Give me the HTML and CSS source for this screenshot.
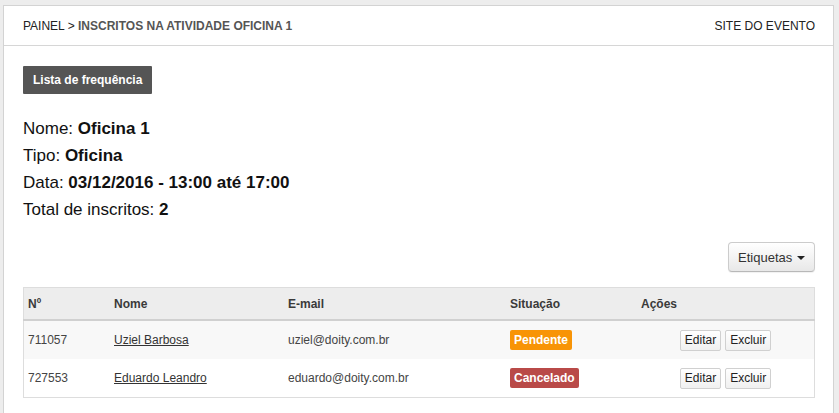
FILE: index.html
```html
<!DOCTYPE html>
<html lang="pt">
<head>
<meta charset="utf-8">
<title>Inscritos</title>
<link rel="stylesheet" href="styles.css">
</head>
<body>
<div class="panel">
  <div class="panel-header">
    <div class="crumb">PAINEL &gt; <strong>INSCRITOS NA ATIVIDADE OFICINA 1</strong></div>
    <a class="site-link" href="#">SITE DO EVENTO</a>
  </div>
  <div class="panel-body">
    <a class="btn-dark" href="#">Lista de frequência</a>
    <div class="info">
      <p>Nome: <b>Oficina 1</b></p>
      <p>Tipo: <b>Oficina</b></p>
      <p>Data: <b>03/12/2016 - 13:00 até 17:00</b></p>
      <p>Total de inscritos: <b>2</b></p>
    </div>
    <div class="toolbar">
      <button class="btn-light" type="button">Etiquetas <span class="caret"></span></button>
    </div>
    <table class="grid">
      <thead>
        <tr>
          <th class="c1">Nº</th>
          <th class="c2">Nome</th>
          <th class="c3">E-mail</th>
          <th class="c4">Situação</th>
          <th class="c5">Ações</th>
        </tr>
      </thead>
      <tbody>
        <tr class="odd">
          <td>711057</td>
          <td><a href="#">Uziel Barbosa</a></td>
          <td>uziel@doity.com.br</td>
          <td><span class="badge warning">Pendente</span></td>
          <td class="actions"><button class="btn-mini" type="button">Editar</button><button class="btn-mini" type="button">Excluir</button></td>
        </tr>
        <tr>
          <td>727553</td>
          <td><a href="#">Eduardo Leandro</a></td>
          <td>eduardo@doity.com.br</td>
          <td><span class="badge danger">Cancelado</span></td>
          <td class="actions"><button class="btn-mini" type="button">Editar</button><button class="btn-mini" type="button">Excluir</button></td>
        </tr>
      </tbody>
    </table>
  </div>
</div>
</body>
</html>
```
FILE: styles.css
```css
html, body {
  margin: 0;
  padding: 0;
}
body {
  background: #ededed;
  font-family: "Liberation Sans", Arial, sans-serif;
  color: #333;
  padding: 5px 0 0 3px;
}
.panel {
  width: 829px;
  min-height: 420px;
  background: #fff;
  border: 1px solid #d3d3d3;
}
.panel-header {
  height: 39px;
  border-bottom: 1px solid #d6d6d6;
  display: flex;
  align-items: center;
  justify-content: space-between;
  padding: 0 18px 0 19px;
  font-size: 12px;
}
.crumb {
  color: #222;
}
.crumb strong {
  color: #555;
}
.site-link {
  color: #222;
  text-decoration: none;
}
.panel-body {
  padding: 20px 18px 0 19px;
}
.btn-dark {
  display: inline-block;
  background: #555;
  color: #fff;
  font-weight: bold;
  font-size: 12px;
  text-decoration: none;
  height: 28px;
  line-height: 28px;
  padding: 0 10px;
  border-radius: 1px;
}
.info {
  margin-top: 21px;
  font-size: 17px;
  color: #111;
}
.info p {
  margin: 0;
  line-height: 27px;
}
.info b {
  color: #111;
}
.toolbar {
  display: flex;
  justify-content: flex-end;
  margin-top: 19px;
  margin-bottom: 15px;
}
.btn-light {
  font-family: "Liberation Sans", Arial, sans-serif;
  font-size: 13px;
  color: #333;
  height: 30px;
  width: 87px;
  padding: 0;
  border: 1px solid #ccc;
  border-bottom-color: #b8b8b8;
  border-radius: 4px;
  background: linear-gradient(#fff, #e8e8e8);
  box-shadow: 0 1px 1px rgba(0,0,0,0.06);
}
.caret {
  display: inline-block;
  width: 0;
  height: 0;
  border-left: 4px solid transparent;
  border-right: 4px solid transparent;
  border-top: 4px solid #222;
  vertical-align: middle;
  margin-left: 1px;
}
.grid {
  width: 792px;
  border-collapse: collapse;
  border: 1px solid #ddd;
  font-size: 12px;
}
.grid th {
  background: #ededed;
  text-align: left;
  font-weight: bold;
  color: #3a3a3a;
  height: 31px;
  padding: 0 4px;
  border-bottom: 2px solid #d0d0d0;
}
.grid td {
  height: 38px;
  padding: 0 4px;
  color: #444;
}
.grid tr.odd td {
  background: #f8f8f8;
}
.grid td a {
  color: #333;
  text-decoration: underline;
}
.c1 { width: 78px; }
.c2 { width: 166px; }
.c3 { width: 214px; }
.c4 { width: 123px; }
.grid td.actions {
  text-align: center;
}
.badge {
  display: inline-block;
  color: #fff;
  font-weight: bold;
  font-size: 12px;
  line-height: 20px;
  padding: 0 4px;
  border-radius: 2px;
}
.badge.warning { background: #f89406; }
.badge.danger { background: #b94a48; }
.btn-mini {
  font-family: "Liberation Sans", Arial, sans-serif;
  font-size: 12px;
  color: #222;
  height: 21px;
  padding: 0 4px;
  margin: 0 2px;
  border: 1px solid #d0d0d0;
  border-radius: 2px;
  background: linear-gradient(#fff, #f0f0f0);
}
```
